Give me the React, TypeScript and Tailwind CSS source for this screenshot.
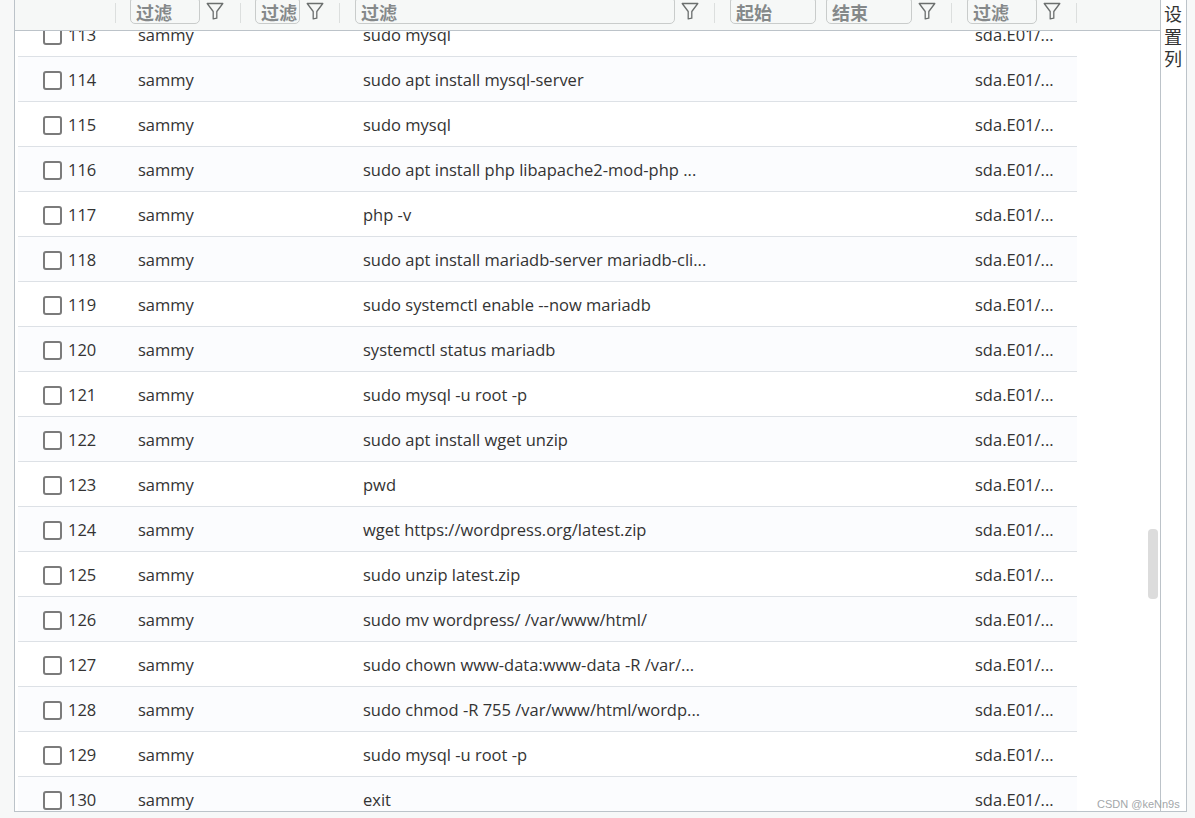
const rows = [
  { id: 113, cmd: "sudo mysql" },
  { id: 114, cmd: "sudo apt install mysql-server" },
  { id: 115, cmd: "sudo mysql" },
  { id: 116, cmd: "sudo apt install php libapache2-mod-php ..." },
  { id: 117, cmd: "php -v" },
  { id: 118, cmd: "sudo apt install mariadb-server mariadb-cli..." },
  { id: 119, cmd: "sudo systemctl enable --now mariadb" },
  { id: 120, cmd: "systemctl status mariadb" },
  { id: 121, cmd: "sudo mysql -u root -p" },
  { id: 122, cmd: "sudo apt install wget unzip" },
  { id: 123, cmd: "pwd" },
  { id: 124, cmd: "wget https://wordpress.org/latest.zip" },
  { id: 125, cmd: "sudo unzip latest.zip" },
  { id: 126, cmd: "sudo mv wordpress/ /var/www/html/" },
  { id: 127, cmd: "sudo chown www-data:www-data -R /var/..." },
  { id: 128, cmd: "sudo chmod -R 755 /var/www/html/wordp..." },
  { id: 129, cmd: "sudo mysql -u root -p" },
  { id: 130, cmd: "exit" },
];

function Funnel() {
  return (
    <svg width="18" height="18" viewBox="0 0 18 18" fill="none" stroke="#6b6f6e" strokeWidth="1.3" strokeLinejoin="round" className="shrink-0">
      <path d="M1.2 1.5H16.8L10.8 9.5V16.2L7.2 16.8V9.5Z" />
    </svg>
  );
}

function FilterInput({ label, className }: { label: string; className: string }) {
  return (
    <div className={`h-[25px] -mt-[1px] rounded-b-[5px] rounded-t-[2px] border border-[#c9cccb] pl-[5px] text-[18px] leading-[26px] font-bold text-[#85898a] overflow-hidden whitespace-nowrap ${className}`}>
      {label}
    </div>
  );
}

function Divider() {
  return <div className="w-px h-[20px] bg-[#dcdfde] shrink-0" />;
}

export default function App() {
  return (
    <div
      className="h-[818px] w-[1195px] overflow-hidden bg-[#f7f8f8] pl-[14px] pr-[8px] pb-[6px]"
      style={{ fontFamily: '"Open Sans", "Noto Sans CJK SC", sans-serif' }}
    >
      <div className="flex h-full border-l border-r border-b border-[#bcc3c9] bg-white">
        <div className="relative flex w-[1146px] flex-col border-r border-[#bcc3c9]">
          <div className="flex h-[31px] shrink-0 items-start border-b border-[#bcc3c9] bg-[#f6f8f7] pt-0">
            <div className="w-[101px] shrink-0 flex justify-end pt-[3px]"><Divider /></div>
            <div className="flex w-[125px] shrink-0 items-start pl-[14px]">
              <FilterInput label="过滤" className="w-[70px]" />
              <div className="ml-[6px] mt-[2px]"><Funnel /></div>
              <div className="ml-[16px] mt-[3px]"><Divider /></div>
            </div>
            <div className="flex w-[100px] shrink-0 items-start pl-[14px]">
              <FilterInput label="过滤" className="w-[45px]" />
              <div className="ml-[6px] mt-[2px]"><Funnel /></div>
              <div className="ml-[15px] mt-[3px]"><Divider /></div>
            </div>
            <div className="flex w-[375px] shrink-0 items-start pl-[14px]">
              <FilterInput label="过滤" className="w-[320px]" />
              <div className="ml-[6px] mt-[2px]"><Funnel /></div>
              <div className="ml-[15px] mt-[3px]"><Divider /></div>
            </div>
            <div className="flex w-[237px] shrink-0 items-start pl-[14px]">
              <FilterInput label="起始" className="w-[86px]" />
              <FilterInput label="结束" className="ml-[10px] w-[86px]" />
              <div className="ml-[6px] mt-[2px]"><Funnel /></div>
              <div className="ml-[15px] mt-[3px]"><Divider /></div>
            </div>
            <div className="flex w-[125px] shrink-0 items-start pl-[14px]">
              <FilterInput label="过滤" className="w-[70px]" />
              <div className="ml-[6px] mt-[2px]"><Funnel /></div>
              <div className="ml-[15px] mt-[3px]"><Divider /></div>
            </div>
          </div>

          <div className="flex-1 overflow-hidden">
            <div className="-mt-[19px] ml-[3px] w-[1059px]">
              {rows.map((row, i) => (
                <div
                  key={row.id}
                  className={`flex h-[45px] items-center border-b border-[#dde1e6] pt-[2px] text-[16.5px] text-[#333] ${i % 2 === 1 ? "bg-[#fbfcfe]" : "bg-white"}`}
                >
                  <div className="flex w-[120px] shrink-0 items-center pl-[25px]">
                    <span className="h-[19px] w-[19px] shrink-0 rounded-[3px] border-2 border-[#7b7b7b] bg-white" />
                    <span className="ml-[6px]">{row.id}</span>
                  </div>
                  <div className="w-[225px] shrink-0">sammy</div>
                  <div className="w-[612px] shrink-0 whitespace-nowrap">{row.cmd}</div>
                  <div className="whitespace-nowrap">sda.E01/...</div>
                </div>
              ))}
            </div>
          </div>

          <div className="absolute left-[1133px] top-[529px] h-[70px] w-[10px] rounded-[4px] bg-[#dcdcdc]" />
        </div>

        <div className="flex w-[24px] shrink-0 flex-col items-center pt-[3px] text-[18px] leading-[22.5px] text-[#333]">
          <span>设</span>
          <span>置</span>
          <span>列</span>
        </div>
      </div>

      <div className="absolute left-[1097px] top-[797px] whitespace-nowrap text-[11px] leading-[14px] text-[#a3a7aa]" style={{ fontFamily: '"Liberation Sans", sans-serif' }}>
        CSDN @keNn9s
      </div>
    </div>
  );
}
